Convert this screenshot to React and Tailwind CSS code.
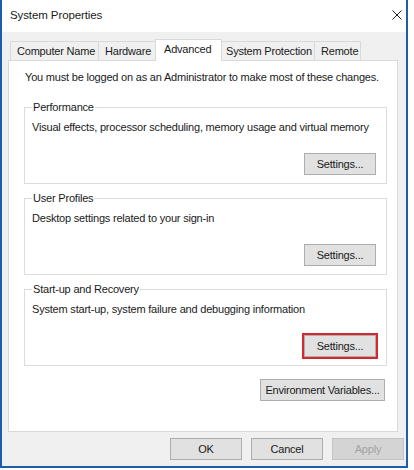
import React from "react";

const font = { fontFamily: '"Liberation Sans", Arial, sans-serif' };

const tabs = [
  { label: "Computer Name", w: "w-[89px]" },
  { label: "Hardware", w: "w-[59px]" },
  { label: "Advanced", w: "w-[67px]" },
  { label: "System Protection", w: "w-[96px]" },
  { label: "Remote", w: "w-[47px]" },
];

const WinButton = ({ children, className = "", disabled = false }) => (
  <button
    className={`h-[22px] border text-[11px] tracking-[-0.2px] leading-none whitespace-nowrap ${
      disabled
        ? "text-[#a3a3a3] border-[#c4c4c4] bg-[#d4d4d4]"
        : "text-[#1a1a1a] border-[#adadad] bg-[#e1e1e1]"
    } ${className}`}
  >
    {children}
  </button>
);

const GroupBox = ({ title, text, highlight }) => (
  <fieldset className="min-w-0 border border-[#dcdcdc] px-[7px] pb-[8px] pt-0 mx-0">
    <legend className="px-[1px] ml-0 text-[11px] tracking-[-0.2px] leading-[14px] text-[#1a1a1a] whitespace-nowrap">
      {title}
    </legend>
    <p className="mt-[6px] text-[11px] tracking-[-0.2px] leading-[14px] text-[#1a1a1a] whitespace-nowrap">{text}</p>
    <div className="flex justify-end mt-[19px] pr-[3px]">
      <WinButton
        className={`w-[72px] ${highlight ? "outline-2 outline-[#d7282f] outline-offset-0" : ""}`}
      >
        Settings...
      </WinButton>
    </div>
  </fieldset>
);

export default function App() {
  return (
    <div className="w-[414px] h-[470px] bg-white overflow-hidden" style={font}>
      <div className="w-[408px] h-[468px] border-l-2 border-r-2 border-b-2 border-[#1c5ea9] flex flex-col">
        {/* Title bar */}
        <div className="h-[32px] bg-white flex items-center justify-between pl-[8px] pr-[4px] shrink-0">
          <span className="text-[11.5px] tracking-[-0.1px] text-[#1a1a1a] -mt-[1px]">System Properties</span>
          <svg width="10" height="10" viewBox="0 0 10 10" className="-mt-[2px]">
            <path d="M0.5 0.5 L9.5 9.5 M9.5 0.5 L0.5 9.5" stroke="#222" strokeWidth="1" />
          </svg>
        </div>

        {/* Body */}
        <div className="flex-1 bg-[#f0f0f0] pl-[6px] pr-[2px] pt-[7px] flex flex-col">
          {/* Tabs */}
          <div className="flex items-end h-[21px] pl-[2px] relative z-10">
            {tabs.map((t) => {
              const active = t.label === "Advanced";
              return active ? (
                <div
                  key={t.label}
                  className={`${t.w} h-[22px] -mb-[1px] pl-[8px] bg-white border border-[#d9d9d9] border-b-0 text-[11px] tracking-[-0.2px] leading-[19px] text-[#1a1a1a] -mx-[2px] relative z-10 whitespace-nowrap`}
                >
                  {t.label}
                </div>
              ) : (
                <div
                  key={t.label}
                  className={`${t.w} h-[19px] pl-[6px] bg-[#f0f0f0] border border-[#d9d9d9] border-b-0 -ml-[1px] first:ml-0 text-[11px] tracking-[-0.2px] leading-[19px] text-[#1a1a1a] whitespace-nowrap`}
                >
                  {t.label}
                </div>
              );
            })}
          </div>

          {/* Panel */}
          <div className="h-[372px] w-[390px] bg-white border border-[#d9d9d9] px-[15px] pt-[9px] flex flex-col">
            <p className="text-[11px] tracking-[-0.2px] leading-[14px] text-[#1a1a1a] pl-[1px] whitespace-nowrap">
              You must be logged on as an Administrator to make most of these changes.
            </p>
            <div className="mt-[16px] flex flex-col gap-[7px] mr-[-5px]">
              <GroupBox
                title="Performance"
                text="Visual effects, processor scheduling, memory usage and virtual memory"
              />
              <GroupBox title="User Profiles" text="Desktop settings related to your sign-in" />
              <GroupBox
                title="Start-up and Recovery"
                text="System start-up, system failure and debugging information"
                highlight
              />
            </div>
            <div className="flex justify-end mt-[13px] mr-[-3px]">
              <WinButton className="w-[125px]">Environment Variables...</WinButton>
            </div>
          </div>

          {/* Bottom buttons */}
          <div className="flex justify-end gap-[9px] mt-[6px]">
            <WinButton className="w-[72px]">OK</WinButton>
            <WinButton className="w-[72px]">Cancel</WinButton>
            <WinButton className="w-[72px]" disabled>
              Apply
            </WinButton>
          </div>
        </div>
      </div>
    </div>
  );
}
